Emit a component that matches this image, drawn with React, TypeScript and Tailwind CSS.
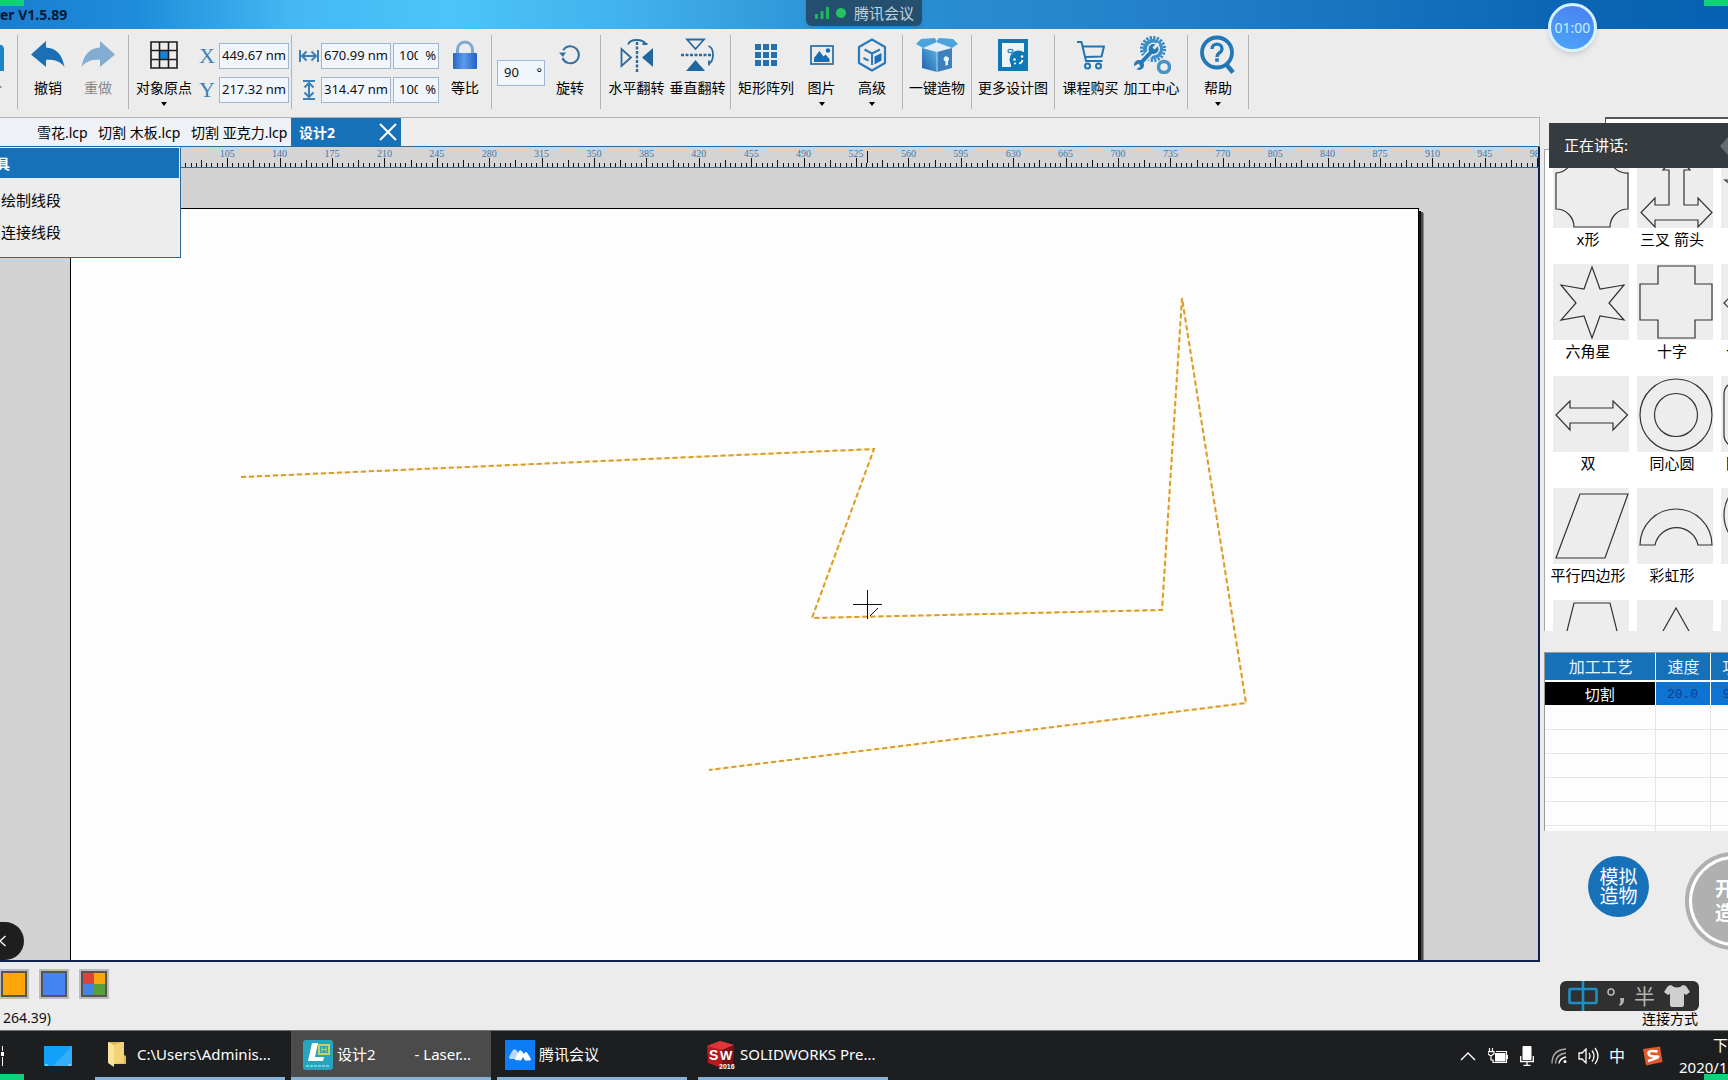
import type { ReactNode } from 'react';

const BLUE = '#1a6fb5';

/* ---------- toolbar icons ---------- */

const UndoIcon = ({ flip = false }: { flip?: boolean }) => (
  <svg width="34" height="28" viewBox="0 0 34 28" className={flip ? '-scale-x-100 opacity-50' : ''}>
    <path d="M0 13.5 15 0v6.5c9 .5 16 5.500 18.500 19.500C29 20 23 18.500 15 18.800V26z" fill={BLUE} />
  </svg>
);

const OriginIcon = () => (
  <svg width="28" height="28" viewBox="0 0 28 28">
    <rect x="9" y="9" width="10" height="10" fill="#1583d6" />
    <path d="M1 1h26v26H1zM9.500 1v26M18.500 1v26M1 9.500h26M1 18.500h26" fill="none" stroke="#1c1c1c" strokeWidth="1.600" />
  </svg>
);

const LockIcon = () => (
  <svg width="26" height="30" viewBox="0 0 26 30">
    <defs>
      <linearGradient id="lock" x1="0" x2="1">
        <stop offset="0" stopColor="#2767c4" />
        <stop offset=".45" stopColor="#5b9bee" />
        <stop offset="1" stopColor="#2161c0" />
      </linearGradient>
    </defs>
    <path d="M5.500 14V9.500a7.500 7.500 0 0 1 15 0V14" fill="none" stroke="#7fa9cf" strokeWidth="3" />
    <rect x="1" y="13" width="24" height="16" rx="1" fill="url(#lock)" />
  </svg>
);

const RotateIcon = () => (
  <svg width="22" height="22" viewBox="0 0 22 22">
    <path d="M4.200 6.200A8.500 8.500 0 1 1 3.500 14" fill="none" stroke="#386f9f" strokeWidth="2" />
    <path d="M0 8.500h7L3.800 13z" fill="#386f9f" />
  </svg>
);

const FlipIcon = ({ vertical = false }: { vertical?: boolean }) => (
  <svg width="34" height="34" viewBox="0 0 34 34" className={vertical ? 'rotate-90' : ''}>
    <path d="M17 4v30" stroke="#2a6a9f" strokeWidth="2.400" strokeDasharray="3 1.500" />
    <path d="M1.500 11v17L11 19.500z" fill="none" stroke="#2a6a9f" strokeWidth="1.800" />
    <path d="M33 10v19L22 19.500z" fill="#1f67a0" />
    <path d="M8 6.500C10 .5 23 .5 26 6.500M22.500 6h5" fill="none" stroke="#2a6a9f" strokeWidth="1.800" />
  </svg>
);

const ArrayIcon = () => (
  <svg width="22" height="22" viewBox="0 0 22 22" fill="#2570ad">
    {[0, 8, 16].map((y) => [0, 8, 16].map((x) => <rect key={`${x}-${y}`} x={x} y={y} width="6" height="6" />))}
  </svg>
);

const PictureIcon = () => (
  <svg width="24" height="20" viewBox="0 0 24 20">
    <rect x="1" y="1" width="22" height="18" fill="none" stroke="#2f74ab" strokeWidth="1.800" />
    <path d="M4 17v-4l5.500-7 4 5.500 2-2 4 4.500v3z" fill="#1a6cb0" />
    <circle cx="18" cy="5.500" r="2.200" fill="#1a6cb0" />
  </svg>
);

const CubeIcon = () => (
  <svg width="30" height="34" viewBox="0 0 30 34">
    <path d="M15 1.500 28 9v16l-13 7.500L2 25V9z" fill="none" stroke="#2a7bb8" strokeWidth="2.200" strokeLinejoin="round" />
    <path d="M7.500 11.500 15 15.500l8-4M15 16v11M6.500 20l5 2.500" fill="none" stroke="#2a7bb8" strokeWidth="2" />
    <path d="m17.500 18.500 7-3.500v7.500l-7 4z" fill="#1d70ba" />
  </svg>
);

const BoxIcon = () => (
  <svg width="42" height="36" viewBox="0 0 42 36">
    <defs>
      <linearGradient id="box" x1="0" x2="1" y1="1" y2="0">
        <stop offset="0" stopColor="#2161a8" />
        <stop offset="1" stopColor="#5cb2e6" />
      </linearGradient>
    </defs>
    <path d="M6 11 21 15v20L6 31z" fill="url(#box)" />
    <path d="M36 11 21 15v20l15-4z" fill="#3c80bd" />
    <path d="M7 10 19 6l16 4-14 4.500z" fill="#dff0fa" />
    <path d="M0 7 5 2l14-1 2 4-14 6zM42 7l-5-5-14-1-3 4 16 6z" fill="#4ba3dc" />
    <path d="M21 15v20" stroke="#a9d6f2" strokeWidth="1" />
    <path d="M31 19.500a2.500 2.500 0 0 1 1 4.500v4l-2.500.8v-4.300a2.500 2.500 0 0 1 1.500-5z" fill="#e6f5fd" />
  </svg>
);

const DesignIcon = () => (
  <svg width="30" height="32" viewBox="0 0 30 32">
    <rect width="30" height="32" fill="#0f79b8" />
    <path d="M4 4h22v9h-3l-10 8v7H4z" fill="#eef3f6" />
    <circle cx="20.500" cy="20.500" r="9" fill="#0f79b8" />
    <ellipse cx="12.500" cy="12" rx="2.500" ry="1.600" fill="none" stroke="#2a86be" strokeWidth="1.200" />
    <path d="M13 15h4" stroke="#2a86be" />
    <circle cx="16.500" cy="20.500" r="1.300" fill="#fff" />
    <circle cx="24" cy="17.500" r="1.300" fill="#fff" />
    <circle cx="17" cy="24.500" r="1" fill="#fff" />
    <path d="M21 24.500q3-.5 3.500-3.500" fill="none" stroke="#fff" strokeWidth="1.600" />
  </svg>
);

const CartIcon = () => (
  <svg width="30" height="30" viewBox="0 0 30 30" fill="none" stroke="#1f74b0" strokeWidth="2">
    <path d="M1 2h4.500L10 21h16.500M6.500 6.500H28L25.500 16.500 9 17" strokeLinejoin="round" />
    <circle cx="11.500" cy="26" r="2.500" />
    <circle cx="22.500" cy="26" r="2.500" />
  </svg>
);

const GearWrenchIcon = () => (
  <svg width="38" height="38" viewBox="0 0 38 38">
    <circle cx="20" cy="13" r="11.500" fill="none" stroke="#2f86c4" strokeWidth="3" strokeDasharray="2.200 1.410" />
    <circle cx="20" cy="13" r="10.200" fill="#3c8fca" />
    <path d="m6 29 14-15" stroke="#ececec" strokeWidth="7" />
    <circle cx="20.500" cy="13" r="6.500" fill="#ececec" />
    <path d="m6 29 14-15" stroke="#2478b8" strokeWidth="4" />
    <circle cx="20.500" cy="13" r="5" fill="#2478b8" />
    <path d="m20.500 12.500 5-5" stroke="#ececec" strokeWidth="3" />
    <circle cx="6" cy="29" r="5" fill="#2478b8" />
    <path d="m6.500 29-7 4.500" stroke="#ececec" strokeWidth="3.500" />
    <circle cx="31" cy="31" r="5.500" fill="#ececec" stroke="#4593c8" strokeWidth="3.500" />
  </svg>
);

const HelpIcon = () => (
  <svg width="36" height="40" viewBox="0 0 36 40" fill="none" stroke="#2277b5">
    <circle cx="17" cy="17.500" r="15" strokeWidth="3.800" />
    <path d="m26 29 7 8.500" strokeWidth="4.500" />
    <path d="M12 14c0-6.500 10-6.500 10 0 0 4-5 3.500-5 8" strokeWidth="3.400" />
    <path d="M15.200 25h3.600" strokeWidth="3.400" />
  </svg>
);

const WidthIcon = ({ vertical = false }: { vertical?: boolean }) => (
  <svg width="22" height="16" viewBox="0 0 22 16" className={vertical ? 'rotate-90' : ''} fill="none" stroke="#3a7fb5" strokeWidth="2">
    <path d="M2 2v12M20 2v12M4 8h14M8.500 3.500 4 8l4.500 4.500M13.500 3.500 18 8l-4.500 4.500" />
  </svg>
);

/* ---------- toolbar parts ---------- */

const Group = ({ className, children }: { className: string; children?: ReactNode }) => (
  <div className={`flex h-[74px] shrink-0 border-r border-[#b4b4b4] ${className}`}>{children}</div>
);

type ToolProps = { label: string; icon: ReactNode; width: string; menu?: boolean; muted?: boolean };

const Tool = ({ label, icon, width, menu, muted }: ToolProps) => (
  <button type="button" className={`flex shrink-0 flex-col items-center ${width}`}>
    <span className="flex h-10 items-center justify-center">{icon}</span>
    <span className={`mt-[3px] text-sm leading-5 whitespace-nowrap ${muted ? 'text-[#8a8a8a]' : 'text-black'}`}>{label}</span>
    {menu && <span className="mt-1 border-x-[3px] border-t-4 border-x-transparent border-t-black" />}
  </button>
);

type FieldProps = { name: string; value: string; unit: string; box: string; input: string };

const Field = ({ name, value, unit, box, input }: FieldProps) => (
  <label className={`flex h-[26px] items-center justify-between border border-[#9fb6d0] bg-[#f1f6fd] pr-0.5 text-[13px] text-[#111] ${box}`}>
    <input aria-label={name} defaultValue={value} className={`min-w-0 bg-transparent outline-none ${input}`} />
    <span>{unit}</span>
  </label>
);

const Toolbar = () => (
  <div className="flex h-[88px] shrink-0 bg-[#ececec] pt-1.5">
    <Group className="w-[18px]">
      <button type="button" aria-label="打开" className="flex w-1 items-start">
        <svg width="4" height="60" viewBox="0 0 4 60"><path d="M0 10h2l2 3v23H0z" fill="#1a86c8" /><path d="M0 52h1.500" stroke="#333" /></svg>
      </button>
    </Group>
    <Group className="px-[5px]">
      <Tool label="撤销" icon={<UndoIcon />} width="w-[50px]" />
      <Tool label="重做" icon={<UndoIcon flip />} width="w-[50px]" muted />
    </Group>
    <Group className="pr-0.5 pl-[7px]">
      <Tool label="对象原点" icon={<OriginIcon />} width="w-14" menu />
      <div className="mt-2 ml-[7px] flex flex-col gap-2">
        <div className="flex items-center">
          <span className="w-5 font-['Liberation_Serif',serif] text-[22px] leading-6 text-[#3d80b5]">X</span>
          <Field name="X" value="449.67" unit="nm" box="w-[70px]" input="w-[46px] pl-0.5" />
        </div>
        <div className="flex items-center">
          <span className="w-5 font-['Liberation_Serif',serif] text-[22px] leading-6 text-[#3d80b5]">Y</span>
          <Field name="Y" value="217.32" unit="nm" box="w-[70px]" input="w-[46px] pl-0.5" />
        </div>
      </div>
    </Group>
    <Group className="pl-1.5">
      <div className="mt-2 flex flex-col gap-2">
        <div className="flex items-center">
          <span className="w-[23px]"><WidthIcon /></span>
          <Field name="宽度" value="670.99" unit="nm" box="w-[70px]" input="w-[46px] pl-0.5" />
          <Field name="宽度比例" value="100" unit="%" box="ml-0.5 w-[46px]" input="ml-[5px] w-[19px]" />
        </div>
        <div className="flex items-center">
          <span className="w-[23px]"><WidthIcon vertical /></span>
          <Field name="高度" value="314.47" unit="nm" box="w-[70px]" input="w-[46px] pl-0.5" />
          <Field name="高度比例" value="100" unit="%" box="ml-0.5 w-[46px]" input="ml-[5px] w-[19px]" />
        </div>
      </div>
      <Tool label="等比" icon={<LockIcon />} width="w-[52px]" />
    </Group>
    <Group className="px-[5px]">
      <div className="mt-[25px]">
        <Field name="角度" value="90" unit="°" box="w-12" input="w-8 pl-1.5" />
      </div>
      <Tool label="旋转" icon={<RotateIcon />} width="w-[50px]" />
    </Group>
    <Group className="pr-0.5 pl-[5px]">
      <Tool label="水平翻转" icon={<FlipIcon />} width="w-[61px]" />
      <Tool label="垂直翻转" icon={<FlipIcon vertical />} width="w-[61px]" />
    </Group>
    <Group className="px-[5px]">
      <Tool label="矩形阵列" icon={<ArrayIcon />} width="w-[60px]" />
      <Tool label="图片" icon={<PictureIcon />} width="w-[51px]" menu />
      <Tool label="高级" icon={<CubeIcon />} width="w-[50px]" menu />
    </Group>
    <Group className="w-[69px]">
      <Tool label="一键造物" icon={<BoxIcon />} width="w-full" />
    </Group>
    <Group className="w-[83px]">
      <Tool label="更多设计图" icon={<DesignIcon />} width="w-full" />
    </Group>
    <Group className="px-[5px]">
      <Tool label="课程购买" icon={<CartIcon />} width="w-[61px]" />
      <Tool label="加工中心" icon={<GearWrenchIcon />} width="w-[61px]" />
    </Group>
    <Group className="w-[61px]">
      <Tool label="帮助" icon={<HelpIcon />} width="w-full" menu />
    </Group>
  </div>
);

/* ---------- workspace ---------- */

const RULER_ORIGIN = 70;
const RULER_STEP = 52.4;

const Ruler = () => (
  <svg className="block h-5 w-full bg-[#d4d4d4]" fontFamily="Liberation Serif, serif" fontSize="10">
    {Array.from({ length: 290 }, (_, i) => {
      const x = Math.round(RULER_ORIGIN + (i * RULER_STEP) / 10);
      const h = i % 10 === 0 ? 9 : i % 5 === 0 ? 7 : 4;
      return <rect key={i} x={x} y={20 - h} width="1" height={h} fill="#111" />;
    })}
    {Array.from({ length: 29 }, (_, i) => (
      <text key={i} x={RULER_ORIGIN + i * RULER_STEP} y="10" textAnchor="middle" fill="#3f77b0">{i * 35}</text>
    ))}
    <rect x="867" y="4" width="1" height="12" fill="#111" />
  </svg>
);

const Tabs = () => (
  <div className="flex h-[30px] shrink-0 border-t border-r border-b border-t-[#b0b0b0] border-r-[#b0b0b0] border-b-[#2a6a9d] bg-[#eeeeee] text-sm" role="tablist">
    <div className="flex bg-[#eef2f6] pt-0.5 pr-1.5 pl-[37px]">
      <button type="button" role="tab" className="w-[61px] text-left">雪花.lcp</button>
      <button type="button" role="tab" className="w-[93px] text-left whitespace-nowrap">切割 木板.lcp</button>
      <button type="button" role="tab" className="w-[94px] text-left whitespace-nowrap">切割 亚克力.lcp</button>
    </div>
    <div className="flex w-[110px] items-center justify-between bg-[#1771b9] pr-1 pl-2 text-white">
      <button type="button" role="tab" aria-selected="true" className="pt-0.5 font-bold">设计2</button>
      <button type="button" aria-label="关闭">
        <svg width="18" height="18" viewBox="0 0 18 18"><path d="M1 1l16 16M17 1 1 17" stroke="#fff" strokeWidth="2" /></svg>
      </button>
    </div>
  </div>
);

const DRAWN_LINE = '241,309 874,281 812,450 1162,442 1182,130 1246,535 709,602';

const Canvas = () => (
  <div className="relative flex min-h-0 flex-1 flex-col overflow-hidden border-r-2 border-b-2 border-[#0e2350] bg-[#d2d2d2] pt-10 pr-[119px] pl-[70px]">
    <div className="flex-1 border-t border-r border-l border-black bg-[#fdfdfd] shadow-[2px_3px_0_#111,4px_4px_0_#4a4a4a,5px_5px_0_#8a8a8a]" />
    <svg className="absolute inset-0 h-full w-full" fill="none">
      <polyline points={DRAWN_LINE} stroke="#fdf0cc" strokeWidth="2" />
      <polyline points={DRAWN_LINE} stroke="#d79c2c" strokeWidth="2" strokeDasharray="5 3" />
      <path d="M867.500 422v29M853 436.500h29" stroke="#111" />
      <path d="m870 448 8-8" stroke="#111" />
    </svg>
    <button type="button" aria-label="收起" className="absolute bottom-0 left-0 flex h-[38px] w-6 items-center rounded-r-[19px] bg-[#1e1e1e]">
      <svg width="6" height="12" viewBox="0 0 6 12"><path d="M5.500 1 0 6l5.500 5" fill="none" stroke="#fff" strokeWidth="1.300" /></svg>
    </button>
  </div>
);

const ToolMenu = () => (
  <div className="absolute top-[30px] left-0 h-[111px] w-[181px] border-t border-r border-b border-t-[#eef2f6] border-r-[#2d6a98] border-b-[#2d6a98] bg-[#ededed] text-[15px] text-black">
    <div className="mr-px h-[30px] overflow-hidden bg-[#1771b9] text-sm leading-8 font-bold text-white">
      <span className="-ml-1">具</span>
    </div>
    <button type="button" className="mt-1.5 block h-8 pl-px">绘制线段</button>
    <button type="button" className="block h-8 pl-px">连接线段</button>
  </div>
);

const StatusArea = () => (
  <div className="h-[68px] shrink-0 bg-[#ececec] pt-[7px]">
    <div className="-ml-px flex gap-2.5">
      <button type="button" aria-label="橙色" className="h-[30px] w-[30px] border-2 border-[#bcbcbc] bg-[#555] p-0.5"><span className="block h-full bg-[#ffa70d]" /></button>
      <button type="button" aria-label="蓝色" className="h-[30px] w-[30px] border-2 border-[#bcbcbc] bg-[#555] p-0.5"><span className="block h-full bg-[#4484f0]" /></button>
      <button type="button" aria-label="多色" className="h-[30px] w-[30px] border-2 border-[#bcbcbc] bg-[#555] p-0.5">
        <span className="grid h-full grid-cols-2 grid-rows-2">
          <span className="bg-[#dc443a]" />
          <span className="bg-[#fba60f]" />
          <span className="bg-[#4484e4]" />
          <span className="bg-[#5a9e38]" />
        </span>
      </button>
    </div>
    <p className="mt-[9px] pl-[3px] text-sm leading-5 text-[#111]">264.39)</p>
  </div>
);

/* ---------- right panel ---------- */

const shapes: { id: string; name?: string; art: ReactNode }[] = [
  { id: 'x', name: 'x形', art: <path d="M20 3h36a18 18 0 0 0 19 18v36a18 18 0 0 0-18 18H21A18 18 0 0 0 3 57V21A18 18 0 0 0 20 3z" /> },
  { id: 'tri-arrow', name: '三叉 箭头', art: <path d="M39 2 53 18h-6v35h14v-7l14 14.500L61 75v-7H18v7L4 60.500 18 46v7h14V18h-6z" /> },
  { id: 'star5', art: <path d="M39 4 49 28h24L54 44l7 26-22-16-22 16 7-26L4 28h25z" /> },
  { id: 'star6', name: '六角星', art: <path d="M39 3 47 25l24-4-15 18 15 17-24-4-8 22-8-22-23 4 15-17L8 21l23 4z" /> },
  { id: 'cross', name: '十字', art: <path d="M21 2h37v18h17v36H58v18H21V56H3V20h18z" /> },
  { id: 'cross-arrow', name: '十字箭头', art: <path d="M39 3 51 15h-8v20h20v-8l12 12-12 12v-8H43v20h8L39 75 27 63h8V43H15v8L3 39l12-12v8h20V15h-8z" /> },
  { id: 'double', name: '双', art: <path d="M3 39l14-14v7h43v-7l14.500 14L60 54v-7H17v7z" /> },
  { id: 'rings', name: '同心圆', art: <><circle cx="39" cy="39" r="36" /><circle cx="39" cy="39" r="21.500" /></> },
  { id: 'round-rect', name: '圆角矩形', art: <rect x="3" y="6" width="70" height="65" rx="12" /> },
  { id: 'parallelogram', name: '平行四边形', art: <path d="M27 6h48L52 70H3z" /> },
  { id: 'rainbow', name: '彩虹形', art: <path d="M3 57a36 36 0 0 1 72 0H61a22 22 0 0 0-43 0z" /> },
  { id: 'circle', art: <circle cx="39" cy="27" r="36" /> },
  { id: 'trapezoid', art: <path d="M21 3h36l18 72H3z" /> },
  { id: 'triangle', art: <path d="M39 8 75 72H3z" /> },
  { id: 'diamond', art: <path d="M39 3 75 39 39 75 3 39z" /> },
];

const ShapePanel = () => (
  <section className="ml-1 flex h-[482px] shrink-0 overflow-hidden border-t border-l border-[#a6a6a6] bg-white pt-0.5 pl-px">
    <div className="grid shrink-0 auto-rows-[112px] grid-cols-[84px_84px_84px] text-[15px] text-black">
      {shapes.map(({ id, name, art }) => (
        <button type="button" key={id} aria-label={name ?? id} className="flex flex-col items-center">
          <span className="ml-1.5 h-[76px] w-[76px] bg-[#ededed]">
            <svg width="76" height="76" viewBox="0 0 76 76" fill="none" stroke="#333" strokeWidth="1.200">{art}</svg>
          </span>
          {name && <span className="leading-[22px] whitespace-nowrap">{name}</span>}
        </button>
      ))}
    </div>
  </section>
);

const ProcessTable = () => (
  <div className="mt-[21px] ml-1 h-[179px] shrink-0 overflow-hidden border-t border-l border-[#999] bg-[#fdfdfd]">
    <table className="w-[221px] table-fixed border-collapse text-center">
      <colgroup>
        <col className="w-[110px]" />
        <col className="w-[55px]" />
        <col className="w-14" />
      </colgroup>
      <thead className="bg-[#1771b9] text-base leading-5 text-[#e6f5ff]">
        <tr className="h-7 border-b-2 border-white">
          <th scope="col" className="border-r border-white p-0 pl-0.5 font-normal">加工工艺</th>
          <th scope="col" className="border-r border-white p-0 pl-0.5 font-normal">速度</th>
          <th scope="col" className="p-0 font-normal">功率</th>
        </tr>
      </thead>
      <tbody>
        <tr className="h-6 bg-[#0d74d3] text-[15px] leading-5">
          <td className="border-r border-white bg-black p-0 text-white">切割</td>
          <td className="border-r border-white p-0 pt-0.5 font-['Liberation_Mono',monospace] text-[13px] text-[#123c8a]">20.0</td>
          <td className="p-0 pt-0.5 font-['Liberation_Mono',monospace] text-[13px] text-[#123c8a]">99.0</td>
        </tr>
        {[0, 1, 2, 3, 4, 5].map((r) => (
          <tr key={r} className="h-6 border-b border-[#e6e6e6]">
            <td className="border-r border-[#e6e6e6] p-0" />
            <td className="border-r border-[#e6e6e6] p-0" />
            <td className="p-0" />
          </tr>
        ))}
      </tbody>
    </table>
  </div>
);

const ImeBar = () => (
  <div className="ml-5 flex h-[30px] w-[139px] shrink-0 items-center justify-between rounded-md bg-[#303030] px-2 text-[#b4b4b4]">
    <svg width="30" height="30" viewBox="0 0 30 30" fill="none" stroke="#1d8fc9" strokeWidth="2.600"><path d="M15 0v30" /><rect x="1.500" y="8" width="27" height="14" rx="1" /></svg>
    <svg width="20" height="24" viewBox="0 0 20 24"><circle cx="5" cy="8" r="3" fill="none" stroke="#b4b4b4" strokeWidth="1.600" /><path d="M14 14h4q1 5-4 8l-1-1.500q2-1.500 1.500-3.500z" fill="#b4b4b4" /></svg>
    <span className="text-[21px] leading-none">半</span>
    <svg width="28" height="24" viewBox="0 0 28 24"><path d="M8 1q6 5 12 0l3 1 4 6-4 3-2-1.500V21q0 2-2 2H9q-2 0-2-2V9.500L5 11 1 8l4-6z" fill="#cfcfcf" /></svg>
  </div>
);

const Aside = () => (
  <aside className="relative flex w-[188px] shrink-0 flex-col overflow-hidden bg-[#ececec]">
    <div className="h-8 shrink-0 pl-[65px]">
      <div className="h-full border-t-2 border-l border-[#555] bg-white" />
    </div>
    <ShapePanel />
    <ProcessTable />
    <div className="flex shrink-0 overflow-hidden pt-[21px]">
      <button type="button" className="mt-[4px] ml-12 h-[61px] w-[61px] shrink-0 rounded-full bg-[#1771b9] text-[19px] leading-[19px] text-white">模拟<br />造物</button>
      <button type="button" className="ml-9 h-[98px] w-[98px] shrink-0 rounded-full border-4 border-[#b0b0b0] bg-white p-[3px]">
        <span className="flex h-full items-center justify-center rounded-full bg-[#b0b0b0] text-[19px] leading-6 font-bold text-white">开始<br />造物</span>
      </button>
    </div>
    <div className="mt-auto flex shrink-0 flex-col pb-1">
      <ImeBar />
      <p className="pr-[30px] text-right text-sm leading-[15px] text-black">连接方式</p>
    </div>
    <div className="absolute top-1.5 right-0 left-[9px] flex h-[45px] items-center justify-between bg-[#363b3f] pl-[15px] text-[15px] text-white">
      正在讲话:
      <svg width="8" height="20" viewBox="0 0 8 20"><path d="M8 1Q4 6 0 10q4 5 8 9z" fill="#666c70" /></svg>
    </div>
  </aside>
);

/* ---------- taskbar ---------- */

const LaserIcon = () => (
  <svg width="30" height="30" viewBox="0 0 30 30">
    <rect width="30" height="30" rx="3" fill="#27a5c0" />
    <path d="M9 3h6l-3 14h9l-1 4H5z" fill="#fff" />
    <rect x="16" y="5" width="10" height="9" fill="none" stroke="#c9d35c" strokeWidth="2" />
    <path d="M19 7v5M23 7v5M19 9.500h4" stroke="#c9d35c" />
    <path d="M3 26h24" stroke="#8fdbe6" strokeWidth="1.500" strokeDasharray="3 1" />
  </svg>
);

const MeetingIcon = () => (
  <svg width="30" height="30" viewBox="0 0 30 30">
    <rect width="30" height="30" fill="#0e7cf4" />
    <path d="M4 18q0-2 4-8 2-2 4 1l2 3-2 5H6q-2 0-2-2z" fill="#b5dafd" />
    <path d="M10 20q0-2 4-9 1.500-2 3.500 1l1.500 2q2-4 4 0l3 5q0 1.500-2 1.500h-4L18 17l-2 3.500z" fill="#fff" />
  </svg>
);

const SolidIcon = () => (
  <svg width="30" height="30" viewBox="0 0 30 30" fontFamily="Liberation Sans, sans-serif" fontWeight="bold" fill="#fff">
    <path d="M1 6 14 1l14 4-1 19-12 4L2 23z" fill="#b51a20" />
    <path d="m1 6 13-5 14 4-12 5z" fill="#e0353a" />
    <path d="m16 10 12-5-1 19-11 3z" fill="#7d1014" />
    <text x="3" y="20" fontSize="14">S</text>
    <text x="14" y="20" fontSize="13">W</text>
    <text x="13" y="29" fontSize="7">2016</text>
  </svg>
);

const FolderIcon = () => (
  <svg width="20" height="27" viewBox="0 0 20 27">
    <path d="M1 1h14q2 0 2 2v11l2 1v8H6z" fill="#e2b650" />
    <path d="M1 1 7 4v22l-6-4z" fill="#fbe39a" />
    <path d="M7 4 15 1h2v21l-10 1z" fill="#f4d376" />
  </svg>
);

type TaskProps = { icon: ReactNode; text: string; box: string };

const Task = ({ icon, text, box }: TaskProps) => (
  <button type="button" className={`flex h-full shrink-0 items-center border-b-[3px] border-[#88b3d8] pt-px text-left whitespace-pre ${box}`}>
    {icon}
    <span>{text}</span>
  </button>
);

const Taskbar = () => (
  <footer className="flex h-[50px] shrink-0 overflow-hidden border-t border-[#707070] bg-[#1d1e20] text-[15px] text-white">
    <button type="button" aria-label="任务视图" className="w-1 shrink-0">
      <svg width="4" height="20" viewBox="0 0 4 20" fill="#fff"><path d="M2 0h1v5H2zM1 6h3v4H1zM2 11h1v9H2z" /></svg>
    </button>
    <button type="button" aria-label="桌面" className="ml-10 w-7 shrink-0">
      <svg width="28" height="20" viewBox="0 0 28 20"><rect width="28" height="20" fill="#12a0f8" /><path d="M28 0v20H9z" fill="#34aefa" /><path d="M1 19h3M24 19h3" stroke="#bfe4fd" /></svg>
    </button>
    <Task icon={<FolderIcon />} text="C:\Users\Adminis..." box="ml-[23px] w-[190px] gap-2.5 pl-3" />
    <Task icon={<LaserIcon />} text={'设计2          - Laser...'} box="ml-1.5 w-[200px] gap-1 bg-[#4b4b4b] pl-3" />
    <Task icon={<MeetingIcon />} text="腾讯会议" box="ml-1.5 w-[190px] gap-1 pl-2" />
    <Task icon={<SolidIcon />} text="SOLIDWORKS Pre..." box="ml-[11px] w-[190px] gap-1 pl-2" />
    <div className="ml-auto flex w-[268px] shrink-0 items-center overflow-hidden">
      <svg className="shrink-0" width="16" height="10" viewBox="0 0 16 10"><path d="m1 9 7-7 7 7" fill="none" stroke="#fff" strokeWidth="1.400" /></svg>
      <svg className="ml-3 shrink-0" width="20" height="16" viewBox="0 0 20 16"><path d="M7 5h10.500v8.500H7z" fill="#fff" /><path d="M8 3.500h10.500v11H5v-3M19.400 7v4M1.500 0v3M4.500 0v3M0 3.600h6v2L3 8 0 6zM3 8v4h2" fill="none" stroke="#fff" strokeWidth="1.200" /></svg>
      <svg className="ml-3 shrink-0" width="14" height="20" viewBox="0 0 14 20"><rect x="2.500" width="9" height="14" rx="1" fill="#fff" /><path d="M.7 10v5.500h12.600V10M7 16v3M3.500 19.300h7" fill="none" stroke="#fff" strokeWidth="1.300" /></svg>
      <svg className="ml-[17px] shrink-0" width="17" height="16" viewBox="0 0 17 16" fill="none" stroke="#aaa" strokeWidth="1.300"><path d="M1 15.500Q1 2 15 1" /><path d="M4.500 15.500Q5 6 15 5" /><path d="M8 15.500Q9 10 15 9" stroke="#fff" /><circle cx="14" cy="13.500" r="1.500" fill="#fff" stroke="none" /></svg>
      <svg className="ml-[10px] shrink-0" width="21" height="18" viewBox="0 0 21 18" fill="none" stroke="#fff" strokeWidth="1.300"><path d="M1 6h3l4-4v14l-4-4H1zM11 6q2 3 0 6M14 3.500q4 5.500 0 11M17 1q6 8 0 16" /></svg>
      <span className="ml-[10px] shrink-0 text-base">中</span>
      <svg className="ml-[17px] shrink-0" width="21" height="20" viewBox="0 0 21 20"><path d="m1 3 17-2.500 2.500 15.500L4 19.500z" fill="#e2592d" /><path d="M15.500 5.500Q6 4 6.500 7.500T14 10.500 6 15" fill="none" stroke="#fff" strokeWidth="2.500" /></svg>
      <div className="ml-4 shrink-0 text-[15px] leading-[22px]">
        <p className="pl-[34px]">下</p>
        <p>2020/1</p>
      </div>
    </div>
  </footer>
);

/* ---------- page ---------- */

export default function App() {
  return (
    <div className="relative flex h-screen flex-col overflow-hidden bg-[#ececec] font-['Noto_Sans','Noto_Sans_CJK_SC',sans-serif]">
      <header className="flex h-[29px] shrink-0 items-center bg-[linear-gradient(90deg,#1a7dd0_0%,#1f8ddb_8%,#45b8f2_17%,#4cc4f9_26%,#42b2ec_36%,#2b92d4_48%,#2686cc_62%,#1a78c2_75%,#0c66b4_90%,#0761b2_100%)] text-sm font-bold text-[#0a1830]">
        er V1.5.89
      </header>
      <Toolbar />
      <div className="relative flex min-h-0 flex-1">
        <main className="flex min-w-0 flex-1 flex-col">
          <Tabs />
          <div className="h-[21px] shrink-0 overflow-hidden border-r-2 border-b border-r-[#0e2350] border-b-[#2a6a9d]"><Ruler /></div>
          <Canvas />
          <StatusArea />
        </main>
        <Aside />
        <ToolMenu />
      </div>
      <Taskbar />

      <div className="absolute top-0 left-[806px] flex h-[26px] w-[116px] items-center rounded-b-md bg-[#244f6e] pl-[9px] text-[15px] text-[#c3d3de] shadow">
        <svg width="14" height="12" viewBox="0 0 14 12" fill="#22b45e"><path d="M0 7h3v5H0zM5.500 4h3v8h-3zM11 0h3v12h-3z" /></svg>
        <span className="mr-2 ml-[7px] h-2.5 w-2.5 rounded-full bg-[#25c463]" />
        腾讯会议
      </div>
      <div className="absolute top-[3px] right-[131px] flex h-[49px] w-[49px] items-center justify-center rounded-full border-[3px] border-[#d5f3fd] bg-[linear-gradient(200deg,#4a80f2,#4aa6f8)] text-sm text-[#c2f0ff] shadow-md">
        01:00
      </div>
      <span className="absolute top-0 left-0 h-1.5 w-6 bg-[#10d07c]" />
      <span className="absolute top-0 right-0 h-1.5 w-6 bg-[#10d07c]" />
      <span className="absolute bottom-0 left-0 h-1.5 w-6 bg-[#10d07c]" />
      <span className="absolute right-0 bottom-0 h-1.5 w-6 bg-[#10d07c]" />
    </div>
  );
}
